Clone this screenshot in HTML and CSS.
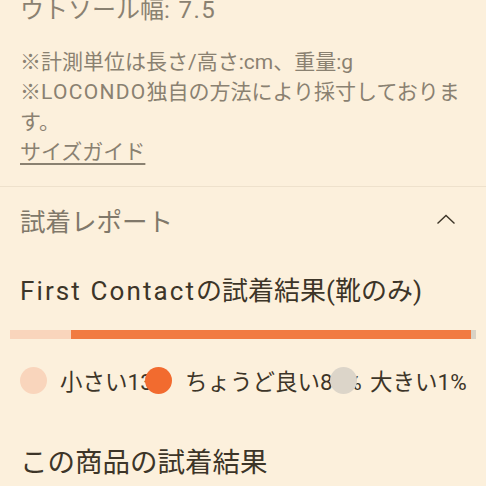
FILE: index.html
```html
<!DOCTYPE html>
<html lang="ja">
<head>
<meta charset="utf-8">
<link rel="stylesheet" href="styles.css">
</head>
<body>
<div class="size-section">
  <div class="spec">ウトソール幅<span class="lat-spec">: 7.5</span></div>
  <div class="notes">
    <p>※計測単位は長さ/高さ:cm、重量:g</p>
    <p>※<span class="lat-note">LOCONDO</span>独自の方法により採寸しております。</p>
    <a class="guide" href="#">サイズガイド</a>
  </div>
</div>
<div class="report">
  <div class="report-head">
    <span class="report-label">試着レポート</span>
    <svg class="chevron" width="20" height="11" viewBox="0 0 20 11"><path d="M1.5 9.5 L10 1.5 L18.5 9.5" fill="none" stroke="#3d3528" stroke-width="1.4"/></svg>
  </div>
  <div class="report-body">
    <h2 class="fit-title"><span class="lat-title">First Contact</span>の試着結果(靴のみ)</h2>
    <div class="bar">
      <span class="seg seg-small" style="width:13%"></span>
      <span class="seg seg-just" style="width:86%"></span>
      <span class="seg seg-big" style="width:1%"></span>
    </div>
    <div class="legend">
      <div class="item item-small"><span class="dot dot-small"></span><span class="lbl">小さい13%</span></div>
      <div class="item item-just"><span class="dot dot-just"></span><span class="lbl">ちょうど良い86%</span></div>
      <div class="item item-big"><span class="dot dot-big"></span><span class="lbl">大きい1%</span></div>
    </div>
    <h2 class="fit-title product-title">この商品の試着結果</h2>
  </div>
</div>
</body>
</html>
```
FILE: styles.css
```css
html, body {
  margin: 0;
  padding: 0;
  background: #fcf0dc;
  overflow: hidden;
}
body {
  font-family: Roboto, "Noto Sans CJK JP", sans-serif;
  color: #3d3528;
  width: 486px;
  height: 486px;
}
.size-section {
  padding: 0 20px 19px;
  border-bottom: 1px solid #eee1cc;
  color: #8a8171;
}
.spec {
  font-size: 24px;
  line-height: 30px;
  margin-top: -5px;
}
.lat-spec {
  letter-spacing: 1.4px;
}
.notes {
  margin-top: 22px;
  font-size: 21px;
  line-height: 30px;
}
.notes p {
  margin: 0;
}
.lat-note {
  letter-spacing: 1.3px;
}
.guide {
  color: #8a8171;
  text-decoration: underline;
  text-underline-offset: 4px;
  display: inline-block;
}
.report-head {
  display: flex;
  justify-content: space-between;
  align-items: center;
  height: 64px;
  padding: 0 30px 0 20px;
}
.report-label {
  font-size: 25.5px;
  color: #80786a;
}
.chevron {
  display: block;
}
.report-body {
  padding: 0 20px;
}
.fit-title {
  margin: 22px 0 0;
  font-size: 26px;
  line-height: 36px;
  font-weight: 400;
  color: #3d3528;
}
.lat-title {
  letter-spacing: 2.1px;
}
.bar {
  display: flex;
  height: 9px;
  margin: 21px -10px 0;
}
.seg {
  display: block;
  height: 100%;
}
.seg-small { background: #f9d5bc; }
.seg-just { background: #f17b41; }
.seg-big { background: #d9d2c5; }
.legend {
  display: flex;
  align-items: center;
  margin-top: 27px;
  height: 28px;
}
.item {
  display: flex;
  align-items: center;
  gap: 13px;
  flex: none;
}
.item-small { width: 125px; }
.item-just { width: 185px; }
.dot {
  width: 27px;
  height: 27px;
  border-radius: 50%;
  flex: none;
}
.dot-small { background: #f9d5bc; }
.dot-just { background: #f26b2f; }
.dot-big { background: #dcd5c9; }
.lbl {
  font-size: 22.5px;
  white-space: nowrap;
  color: #3d3528;
}
.product-title {
  margin-top: 51px;
  font-size: 27.5px;
}
```
